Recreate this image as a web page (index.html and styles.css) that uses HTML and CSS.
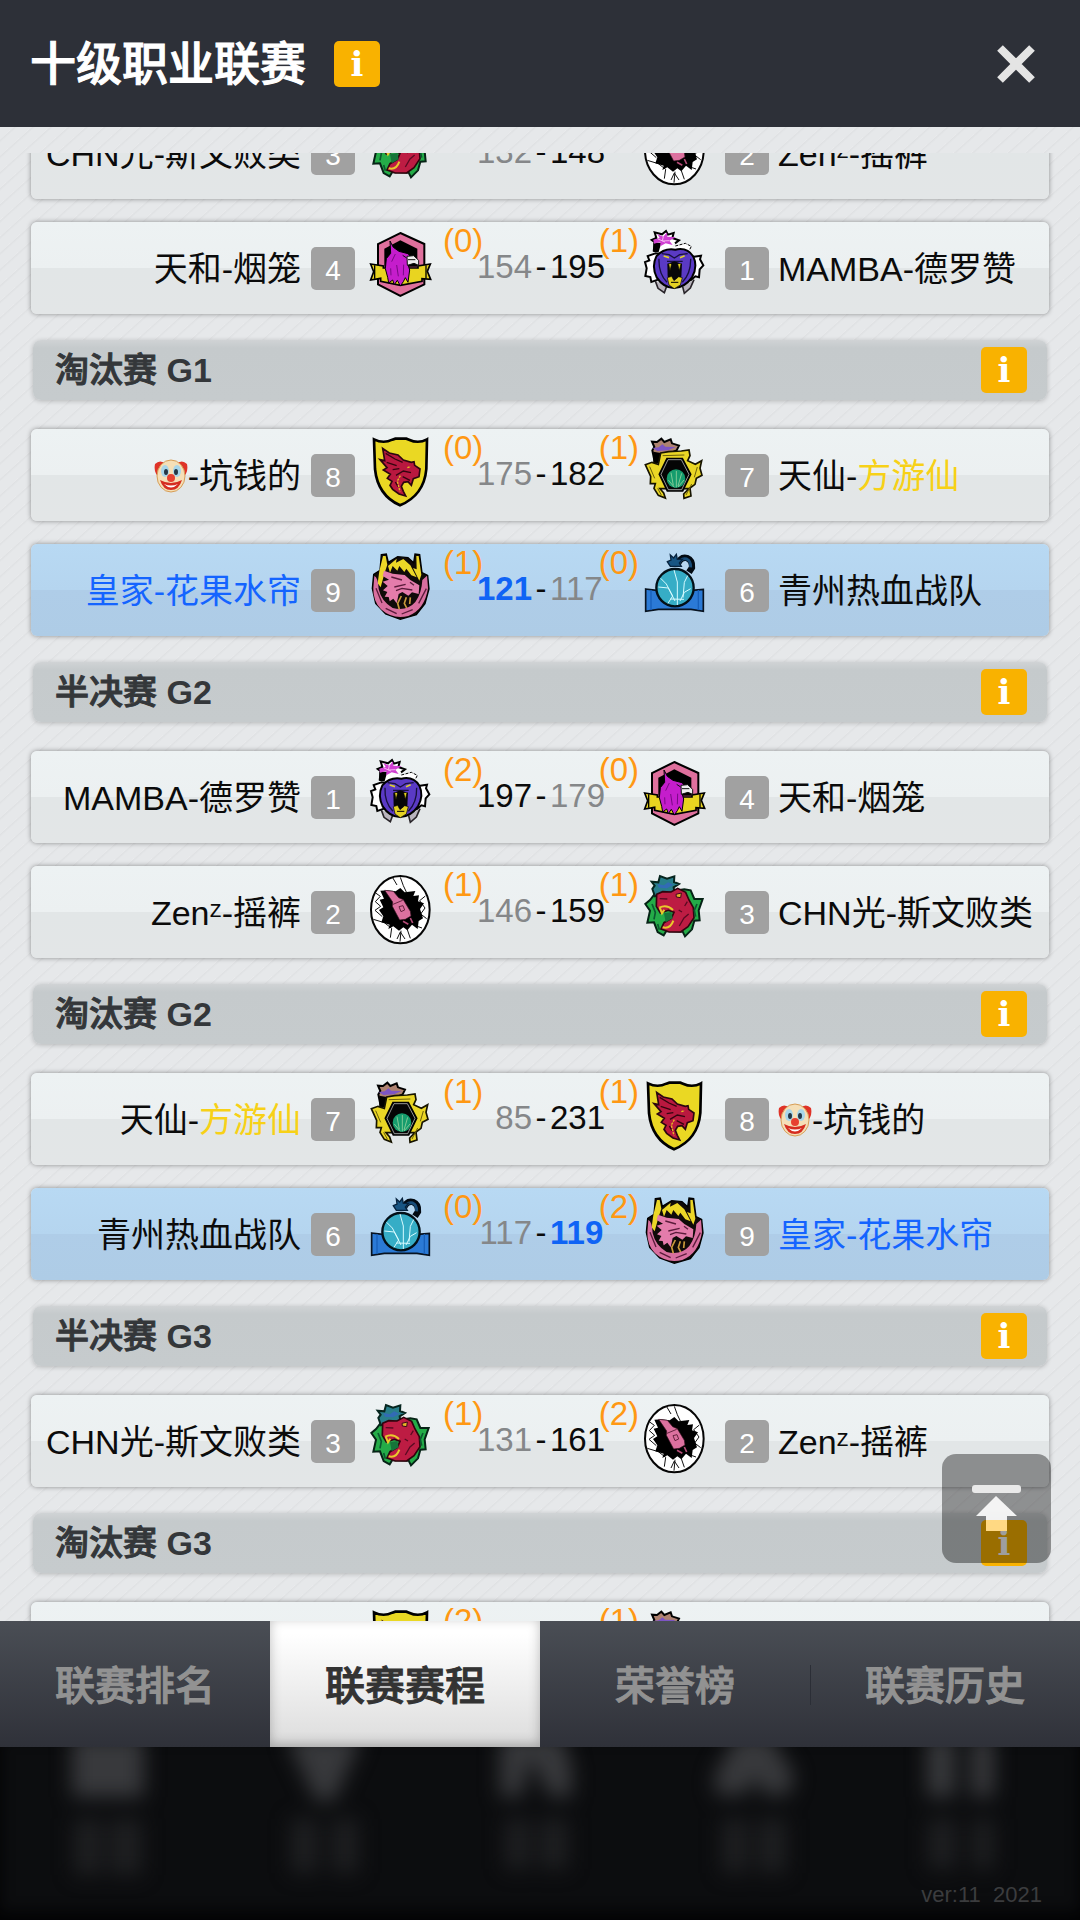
FILE: index.html
```html
<!DOCTYPE html>
<html lang="zh-CN">
<head>
    <meta charset="UTF-8">
    <meta name="viewport" content="width=device-width, initial-scale=1.0">
    <title>十级职业联赛</title>
    <link rel="stylesheet" href="styles.css">
</head>
<body>
    <!-- 队徽 -->
    <svg class="sprite" aria-hidden="true">
        <symbol id="logo-tianhe" viewBox="87 48 192 252">
            <path d="M181 69 253 102V223L181 258 114 223V102Z" fill="#df709d" stroke="#000" stroke-width="6"/>
            <path d="M181 91 232 116V170H133V116Z" fill="#000"/>
            <path d="M92 162 130 168V174H234V168L271 162 262 184 272 208 246 206V214L181 226 122 214V205L92 210 101 185Z" fill="#e9d420" stroke="#000" stroke-width="5"/>
            <path d="M104 166V206M258 166V206" stroke="#000" stroke-width="4"/>
            <path d="M150 93 160 112 177 124 204 131 211 139 202 156 209 180 204 217 196 203 190 215 181 228 172 211 163 224 158 210 146 219 143 202 136 176 139 146 152 130Z" fill="#c51dcc" stroke="#000" stroke-width="3"/>
            <path d="M166 132 155 155M170 165 175 199M191 164 190 196M152 175 153 196" fill="none" stroke="#780984" stroke-width="3"/>
            <path d="M201 139 221 137 236 151V166L222 160 202 166Z" fill="#eee" stroke="#111" stroke-width="3"/>
            <path d="M204 149H226M188 136 200 144" stroke="#111" stroke-width="3"/>
        </symbol>
        <symbol id="logo-mamba" viewBox="87 30 192 252">
            <path d="M124 112 101 120 106 133 93 138 98 157 94 180 109 183 112 198 132 191 230 193 244 181 255 184 257 160 268 148 258 130 261 119 240 122Z" fill="#fff" stroke="#000" stroke-width="6"/>
            <path d="M124 195 132 217 151 230 158 211M206 212 211 232 229 216 240 191" fill="#b9b4bd" stroke="#29252a" stroke-width="5"/>
            <path d="M119 107 122 79 113 72 127 66 122 49 144 55 156 45 162 56 179 51 175 66 195 73 183 82 174 94 214 80 232 91 227 101 180 103Z" fill="#fff"/>
            <path d="M119 107 122 79 113 72 127 66 122 49 144 55 156 45 162 56 179 51 175 66 195 73 183 82" fill="none" stroke="#000" stroke-width="6"/>
            <path d="M118 80H142L134 108H118Z" fill="#000"/>
            <path d="M184 90 214 82 232 91 227 101" fill="none" stroke="#000" stroke-width="3" stroke-dasharray="9 4"/>
            <path d="M118 71 137 66 130 54 148 62 159 49 160 62 185 64 166 74 176 87 155 82 139 91 139 78 120 83Z" fill="#d03fd2"/>
            <path d="M148 62 145 75 166 74M132 69 153 78" fill="none" stroke="#f4b6f0" stroke-width="3"/>
            <path d="M127 121Q150 95 184 101Q220 93 238 122Q252 151 234 184Q212 215 180 216Q148 215 128 184Q112 151 127 121Z" fill="#5a3ac5" stroke="#000" stroke-width="6"/>
            <path d="M149 120 165 125M212 119 198 125" stroke="#ddcf31" stroke-width="5"/>
            <path d="M143 113 165 116 181 126 197 116 221 113M135 128Q133 172 159 199M230 128Q231 172 205 199M159 136H206" fill="none" stroke="#17103f" stroke-width="4"/>
            <path d="M160 143 181 136 204 143 202 182 181 193 161 182Z" fill="#070609"/>
            <path d="M164 143 168 164 173 144M191 144 196 164 201 143M160 185 173 181 180 194 194 182 205 185 199 207 181 218 165 207Z" fill="#e4d123" stroke="#000" stroke-width="2"/>
            <path d="M171 199H193" stroke="#000" stroke-width="3"/>
        </symbol>
        <symbol id="logo-shield" viewBox="87 24 192 252">
            <path d="M102 43Q130 57 157 44L166 41H199L207 44Q235 57 261 43L259 132Q252 211 180 241Q113 211 105 132Z" fill="#ead823" stroke="#000" stroke-width="8"/>
            <path d="M128 70 148 84 174 90 190 105 214 112 222 110 224 121 240 132 237 155 220 161 214 181 204 170 191 172 184 184 190 199 197 213 177 207 158 193 150 181 156 169 142 160 151 148 130 135 141 128 120 104 134 107Z" fill="#b9183f" stroke="#2c0710" stroke-width="5"/>
            <path d="M137 85 165 102 188 112M140 112 170 122M158 134 178 131M168 151 190 138 213 143M188 155 210 166M166 171 174 185" fill="none" stroke="#33050f" stroke-width="4"/>
            <path d="M181 152 172 168 180 200M202 128 212 125" fill="none" stroke="#e5b923" stroke-width="4" stroke-dasharray="7 3"/>
        </symbol>
        <symbol id="logo-tianxian" viewBox="907 24 192 252">
            <path d="M941 106 935 76 941 66 934 50 949 51 962 41 971 51 990 43 994 55 1015 62 1008 76 985 86 963 99Z" fill="#ae8270" stroke="#000" stroke-width="6"/>
            <path d="M938 80 960 84 957 114H938Z" fill="#000"/>
            <path d="M936 69 954 67 965 58 974 65 1005 66 982 76 950 78Z" fill="#7d55c4"/>
            <path d="M960 84 984 80 1022 78 1045 75 1048 92 1041 107 1064 118 1083 107 1078 130 1084 151 1067 160 1063 178 1048 189 1051 213 1030 220 1029 207 1045 191H958L969 204 974 219 953 211 940 190 944 176 929 176 930 154 914 119 934 112 953 118Z" fill="#ead625" stroke="#171400" stroke-width="5"/>
            <path d="M979 101H1025L1050 148 1026 198H980L956 148Z" fill="#050505" stroke="#000" stroke-width="5"/>
            <path d="M982 104H1022L1045 148 1023 194H983L961 148Z" fill="none" stroke="#ddd" stroke-width="2"/>
            <circle cx="1006" cy="161" r="28" fill="#159c6d"/>
            <path d="M1007 138V187M991 143 998 181M1023 145 1012 183M983 165 1001 187M1030 165 1012 186" fill="none" stroke="#b5e0a9" stroke-width="2"/>
            <path d="M966 92 1031 90M927 125 942 160M1070 126 1061 157M951 190 962 210M1053 177 1036 210" fill="none" stroke="#6b5f0c" stroke-width="3"/>
        </symbol>
        <symbol id="logo-dragon" viewBox="87 24 192 252">
            <path d="M124 44 139 42 145 67 173 50 204 53 221 68 225 42 239 44 246 98 263 106 267 147 255 191 229 224 181 238 137 222 107 190 97 145 101 103 120 91Z" fill="#100b09" stroke="#000" stroke-width="4"/>
            <path d="M129 48 137 48 142 74 134 98 122 142 113 130 118 93ZM144 78 170 56 168 68 190 57 211 76 230 112 214 106 199 86 193 96 178 78 172 92 158 78 150 98ZM229 48 236 48 244 104 238 122 219 84 230 88Z" fill="#ecd727"/>
            <path d="M103 108Q114 112 116 147Q124 184 158 204Q202 214 226 186Q245 160 247 120L261 107L264 145Q254 209 205 228Q159 240 123 208Q99 184 100 145Z" fill="#d96f9f"/>
            <path d="M132 92 158 101 194 105 211 120 238 136 236 162 216 157 205 167 187 156 176 162 170 190 160 176 149 184 146 171 134 170 142 156 129 151 143 138 128 125 147 119 128 108Z" fill="#e47cab"/>
            <path d="M154 111 186 120M163 141 197 133M168 152 186 145 217 150M108 145 126 189M259 146 236 190M137 205 170 221M218 209 185 222M210 127 222 136" fill="none" stroke="#5b1c3b" stroke-width="4"/>
            <path d="M184 168 173 190 178 208M199 172 193 190 200 204M211 172 209 192" fill="none" stroke="#c99a3a" stroke-width="5"/>
        </symbol>
        <symbol id="logo-bomb" viewBox="907 24 192 252">
            <path d="M915 147 948 151H1053L1088 148V214L1051 208H953L915 214Z" fill="#2b7ad6" stroke="#081321" stroke-width="5"/>
            <path d="M931 150V210M1073 150V210" stroke="#1860ba" stroke-width="4"/>
            <path d="M1010 76Q1019 49 1039 54Q1056 61 1054 83L1045 97" fill="none" stroke="#020a12" stroke-width="19"/>
            <path d="M1012 76Q1020 52 1038 57Q1051 63 1050 82" fill="none" stroke="#174c78" stroke-width="9"/>
            <path d="M980 65 991 60 989 45 999 54 1007 43 1010 58 1025 58 1016 69 1022 79H989Z" fill="#185583" stroke="#07233e" stroke-width="4"/>
            <circle cx="1003" cy="143" r="56" fill="#36adc6" stroke="#031018" stroke-width="7"/>
            <path d="M1000 90 1010 126 1010 195M960 115 977 132 996 168 982 190M1041 107 1031 127 1027 173M953 141 983 144 1003 183M1050 146 1031 157 1018 183M989 177 1030 178" fill="none" stroke="#d7fbff" stroke-width="3"/>
        </symbol>
        <symbol id="logo-zen" viewBox="87 30 192 252">
            <ellipse cx="181" cy="149" rx="88" ry="101" fill="#fff" stroke="#050505" stroke-width="6"/>
            <path d="M181 52 190 77 199 96M158 53 171 75M107 99 121 109 106 125 122 139 105 151 127 170M100 178 133 188 155 205 151 233M256 108 239 122 255 144 242 162 260 176M183 212 180 245M202 209 211 235M229 198 246 204M171 237 181 216 195 237" fill="none" stroke="#111" stroke-width="3"/>
            <path d="M121 92 143 91 167 94 181 84 194 97 226 93 220 108 237 106 234 124 252 130 240 147 249 175 236 183 233 207 216 194 202 211 190 202 177 212 160 199 145 207 149 194 124 187 130 169 117 150 130 142 119 119 132 116Z" fill="#000"/>
            <path d="M134 91 160 94 176 113 190 119 211 154 213 168 196 178 179 180 157 139 158 126Z" fill="#dc719f" stroke="#371020" stroke-width="2"/>
            <path d="M159 133 188 121M177 140 189 137 194 150 183 155Z" fill="none" stroke="#67233f" stroke-width="3"/>
            <path d="M189 184 205 193M211 174 218 189" stroke="#b44c78" stroke-width="5"/>
        </symbol>
        <symbol id="logo-chn" viewBox="907 30 192 252">
            <path d="M943 101 928 120 914 132 928 152 920 188 940 187 951 216 969 226 977 213 1026 215 1033 229 1054 208 1061 182 1077 181 1074 151 1086 117 1061 117 1050 91 1031 88Z" fill="#24ac48" stroke="#062316" stroke-width="6"/>
            <path d="M943 109 935 87 942 77 933 65 953 67 958 48 979 56 1001 49 1000 66 1015 72 999 82 1001 96 961 103Z" fill="#297f8b" stroke="#07261f" stroke-width="6"/>
            <path d="M950 72 970 76 982 67 998 74 979 85 955 83Z" fill="#326bb5"/>
            <path d="M948 103 966 95 991 96 1011 85 1035 97 1045 120 1058 143 1060 173 1042 200 1020 216H986L961 207 970 188 992 175 1000 157 983 151 959 159 947 139Z" fill="#bd1c43" stroke="#31040e" stroke-width="5"/>
            <path d="M970 160 992 156 996 175 975 187Z" fill="#16753a"/>
            <path d="M956 143Q978 132 997 150M957 142 964 160 971 149M966 202Q989 208 998 182" fill="none" stroke="#e9c92c" stroke-width="6"/>
            <path d="M1006 103 1022 99 1020 113 1007 111Z" fill="#e8b526" stroke="#3c071b" stroke-width="3"/>
            <path d="M957 116 980 117M1040 125 1032 138M1044 162 1030 174 1016 198M1014 150 1024 156" fill="none" stroke="#5a0a22" stroke-width="4"/>
            <path d="M934 132 944 157 940 178M1069 132 1061 151 1065 170M951 192 956 209" fill="none" stroke="#0b5930" stroke-width="5"/>
        </symbol>
        <symbol id="clown" viewBox="0 0 34 34">
            <path d="M1 5Q6 0 12 5L7 20Q-1 15 1 5ZM33 5Q28 0 22 5L27 20Q35 15 33 5Z" fill="#df3328"/>
            <ellipse cx="17" cy="17" rx="14" ry="16" fill="#f5dfb7" stroke="#d79d55"/>
            <ellipse cx="11" cy="12" rx="4" ry="6" fill="#a8d6ea"/>
            <ellipse cx="23" cy="12" rx="4" ry="6" fill="#a8d6ea"/>
            <ellipse cx="12" cy="13" rx="2" ry="3" fill="#243746"/>
            <ellipse cx="22" cy="13" rx="2" ry="3" fill="#243746"/>
            <path d="M6 21Q17 27 28 21Q25 31 17 31Q9 31 6 21Z" fill="#d52d20"/>
            <path d="M10 25Q17 28 24 25Q17 32 10 25Z" fill="#fff"/>
            <circle cx="17" cy="19" r="4" fill="#e74130"/>
        </symbol>
    </svg>

    <header class="header">
        <h1>十级职业联赛</h1>
        <button class="btn-info" type="button" aria-label="联赛说明">i</button>
        <button class="btn-close" type="button" aria-label="关闭">
            <svg viewBox="0 0 40 40" aria-hidden="true"><path d="M4 4 36 36M36 4 4 36" stroke="#e4e4e4" stroke-width="8"/></svg>
        </button>
    </header>

    <main class="content">
        <div class="schedule">
            <div class="match">
                <span class="team home">CHN光-斯文败类</span>
                <span class="seed">3</span>
                <svg class="logo home"><use href="#logo-chn"/></svg>
                <div class="score">
                    <span class="wins home">(0)</span>
                    <span class="points lose">132</span><span>-</span><span class="points">148</span>
                    <span class="wins away">(1)</span>
                </div>
                <svg class="logo"><use href="#logo-zen"/></svg>
                <span class="seed">2</span>
                <span class="team">Zenᶻ-摇裤</span>
            </div>
            <div class="match">
                <span class="team home">天和-烟笼</span>
                <span class="seed">4</span>
                <svg class="logo home"><use href="#logo-tianhe"/></svg>
                <div class="score">
                    <span class="wins home">(0)</span>
                    <span class="points lose">154</span><span>-</span><span class="points">195</span>
                    <span class="wins away">(1)</span>
                </div>
                <svg class="logo"><use href="#logo-mamba"/></svg>
                <span class="seed">1</span>
                <span class="team">MAMBA-德罗赞</span>
            </div>

            <div class="round">
                <h2>淘汰赛 <b>G1</b></h2>
                <button class="btn-info" type="button" aria-label="淘汰赛 G1 说明">i</button>
            </div>
            <div class="match">
                <span class="team home"><svg class="emoji" role="img" aria-label="小丑"><use href="#clown"/></svg>-坑钱的</span>
                <span class="seed">8</span>
                <svg class="logo home"><use href="#logo-shield"/></svg>
                <div class="score">
                    <span class="wins home">(0)</span>
                    <span class="points lose">175</span><span>-</span><span class="points">182</span>
                    <span class="wins away">(1)</span>
                </div>
                <svg class="logo"><use href="#logo-tianxian"/></svg>
                <span class="seed">7</span>
                <span class="team">天仙-<span class="gold">方游仙</span></span>
            </div>
            <div class="match mine">
                <span class="team home me">皇家-花果水帘</span>
                <span class="seed">9</span>
                <svg class="logo home"><use href="#logo-dragon"/></svg>
                <div class="score">
                    <span class="wins home">(1)</span>
                    <span class="points me">121</span><span>-</span><span class="points lose">117</span>
                    <span class="wins away">(0)</span>
                </div>
                <svg class="logo"><use href="#logo-bomb"/></svg>
                <span class="seed">6</span>
                <span class="team">青州热血战队</span>
            </div>

            <div class="round">
                <h2>半决赛 <b>G2</b></h2>
                <button class="btn-info" type="button" aria-label="半决赛 G2 说明">i</button>
            </div>
            <div class="match">
                <span class="team home">MAMBA-德罗赞</span>
                <span class="seed">1</span>
                <svg class="logo home"><use href="#logo-mamba"/></svg>
                <div class="score">
                    <span class="wins home">(2)</span>
                    <span class="points">197</span><span>-</span><span class="points lose">179</span>
                    <span class="wins away">(0)</span>
                </div>
                <svg class="logo"><use href="#logo-tianhe"/></svg>
                <span class="seed">4</span>
                <span class="team">天和-烟笼</span>
            </div>
            <div class="match">
                <span class="team home">Zenᶻ-摇裤</span>
                <span class="seed">2</span>
                <svg class="logo home"><use href="#logo-zen"/></svg>
                <div class="score">
                    <span class="wins home">(1)</span>
                    <span class="points lose">146</span><span>-</span><span class="points">159</span>
                    <span class="wins away">(1)</span>
                </div>
                <svg class="logo"><use href="#logo-chn"/></svg>
                <span class="seed">3</span>
                <span class="team">CHN光-斯文败类</span>
            </div>

            <div class="round">
                <h2>淘汰赛 <b>G2</b></h2>
                <button class="btn-info" type="button" aria-label="淘汰赛 G2 说明">i</button>
            </div>
            <div class="match">
                <span class="team home">天仙-<span class="gold">方游仙</span></span>
                <span class="seed">7</span>
                <svg class="logo home"><use href="#logo-tianxian"/></svg>
                <div class="score">
                    <span class="wins home">(1)</span>
                    <span class="points lose">85</span><span>-</span><span class="points">231</span>
                    <span class="wins away">(1)</span>
                </div>
                <svg class="logo"><use href="#logo-shield"/></svg>
                <span class="seed">8</span>
                <span class="team"><svg class="emoji" role="img" aria-label="小丑"><use href="#clown"/></svg>-坑钱的</span>
            </div>
            <div class="match mine">
                <span class="team home">青州热血战队</span>
                <span class="seed">6</span>
                <svg class="logo home"><use href="#logo-bomb"/></svg>
                <div class="score">
                    <span class="wins home">(0)</span>
                    <span class="points lose">117</span><span>-</span><span class="points me">119</span>
                    <span class="wins away">(2)</span>
                </div>
                <svg class="logo"><use href="#logo-dragon"/></svg>
                <span class="seed">9</span>
                <span class="team me">皇家-花果水帘</span>
            </div>

            <div class="round">
                <h2>半决赛 <b>G3</b></h2>
                <button class="btn-info" type="button" aria-label="半决赛 G3 说明">i</button>
            </div>
            <div class="match">
                <span class="team home">CHN光-斯文败类</span>
                <span class="seed">3</span>
                <svg class="logo home"><use href="#logo-chn"/></svg>
                <div class="score">
                    <span class="wins home">(1)</span>
                    <span class="points lose">131</span><span>-</span><span class="points">161</span>
                    <span class="wins away">(2)</span>
                </div>
                <svg class="logo"><use href="#logo-zen"/></svg>
                <span class="seed">2</span>
                <span class="team">Zenᶻ-摇裤</span>
            </div>

            <div class="round">
                <h2>淘汰赛 <b>G3</b></h2>
                <button class="btn-info" type="button" aria-label="淘汰赛 G3 说明">i</button>
            </div>
            <div class="match">
                <span class="team home"></span>
                <span></span>
                <svg class="logo home"><use href="#logo-shield"/></svg>
                <div class="score">
                    <span class="wins home">(2)</span>
                    <span class="wins away">(1)</span>
                </div>
                <svg class="logo"><use href="#logo-tianxian"/></svg>
            </div>
        </div>

        <button class="btn-top" type="button" aria-label="回到顶部">
            <svg viewBox="0 0 109 109" aria-hidden="true">
                <rect x="30" y="31" width="49" height="8" rx="3" fill="#e9e9e9"/>
                <path d="M54 42 75 62H65V77H44V62H34Z" fill="#fff" fill-opacity=".9"/>
                <path d="M44 66H65V77H44Z" fill="#ffd983"/>
            </svg>
        </button>
    </main>

    <nav class="tabs">
        <a href="#">联赛排名</a>
        <a href="#" class="active" aria-current="page">联赛赛程</a>
        <a href="#">荣誉榜</a>
        <a href="#">联赛历史</a>
    </nav>

    <footer class="footer">
        <!-- 底部菜单的模糊倒影 -->
        <div class="shadows" aria-hidden="true">
            <svg viewBox="0 0 120 140"><path d="M24-10H96V50H24Z"/><path class="dim" d="M26 72H54V128H26ZM62 72H94V128H62Z"/></svg>
            <svg viewBox="0 0 120 140"><path d="M22-10H98L70 54H52Z"/><path class="dim" d="M27 72H54V126H27ZM68 72H94V126H68Z"/></svg>
            <svg viewBox="0 0 120 140"><path d="M20-10H82L92 20V50H70L50 10 42 50H20Z"/><path class="dim" d="M25 72H50V122H25ZM60 72H88V122H60Z"/></svg>
            <svg viewBox="0 0 120 140"><path d="M40-10H75L99 30 92 48H68L60 30 48 48H20L18 30Z"/><path class="dim" d="M26 72H52V126H26ZM62 72H90V126H62Z"/></svg>
            <svg viewBox="0 0 120 140"><path d="M15-10H43V50H15ZM59-10H82V50H59Z"/><path class="dim" d="M16 72H44V122H16ZM60 72H82V122H60Z"/></svg>
        </div>
        <p class="version">ver:11 &nbsp;2021</p>
    </footer>
</body>
</html>
```

FILE: styles.css
```css
* {
    box-sizing: border-box;
}

body {
    margin: 0;
    height: 100vh;
    display: flex;
    flex-direction: column;
    overflow: hidden;
    font-family: "Liberation Sans", "Noto Sans CJK SC", "DejaVu Sans", sans-serif;
    font-size: 34px;
    color: #0b0b0b;
    background: #0c0d0f;
}

button {
    border: none;
    padding: 0;
    background: none;
    cursor: pointer;
}

.sprite {
    display: none;
}

/* 顶部标题栏 */
.header {
    flex: none;
    height: 127px;
    padding: 0 44px 0 30px;
    display: flex;
    align-items: center;
    background: #2d3038;
}

.header h1 {
    margin: 0 28px 0 0;
    font-size: 46px;
    font-weight: 500;
    line-height: 56px;
    color: #fff;
    -webkit-text-stroke: 1px #fff;
}

.btn-info {
    width: 46px;
    height: 46px;
    border-radius: 5px;
    background: #f9b200;
    color: #fff;
    font-family: "DejaVu Serif", serif;
    font-size: 34px;
    font-weight: bold;
    line-height: 46px;
}

.btn-close {
    width: 40px;
    height: 40px;
    margin-left: auto;
}

.btn-close svg {
    display: block;
}

/* 赛程列表 */
.content {
    position: relative;
    flex: 1;
    min-height: 0;
    padding-top: 26px;
    background: repeating-linear-gradient(-42deg, #e6e8ea 0, #e6e8ea 9px, #dfe1e3 11px, #eaebed 12px);
}

.schedule {
    height: 100%;
    padding: 0 31px;
    overflow: hidden;
}

.match {
    position: relative;
    height: 92px;
    margin-bottom: 23px;
    display: grid;
    grid-template-columns: 1fr 44px 78px 210px 82px 44px 1fr;
    align-items: center;
    border-radius: 6px;
    background: linear-gradient(#edf2f3 0, #ecf0f1 50%, #e2e6e7 50%, #e3e6e7 100%);
    box-shadow: 0 0 5px rgba(0, 0, 0, 0.4);
}

/* 列表已向下滚动，第一行只露出下半部分 */
.match:first-child {
    margin-top: -46px;
}

.match.mine {
    background: linear-gradient(#b8d9f3 0, #b5d5ef 50%, #afcde8 50%, #aecce6 100%);
}

.team {
    padding: 2px 9px 0;
    line-height: 44px;
    white-space: nowrap;
}

.team.home {
    padding-right: 10px;
    text-align: right;
}

.team.me {
    color: #1464ff;
}

.gold {
    color: #f7d117;
}

.emoji {
    width: 34px;
    height: 34px;
    vertical-align: -5px;
}

.seed {
    height: 43px;
    border-radius: 5px;
    background: #a1a1a1;
    color: #fff;
    font-size: 28px;
    line-height: 47px;
    text-align: center;
}

.logo {
    width: 64px;
    height: 84px;
}

.logo.home {
    justify-self: end;
}

.score {
    position: relative;
    height: 92px;
    display: grid;
    grid-template-columns: 99px 18px 1fr;
    font-size: 33px;
    line-height: 90px;
    text-align: center;
}

.points {
    text-align: left;
}

.points:nth-child(2) {
    text-align: right;
}

.points.lose {
    color: #858789;
}

.points.me {
    color: #0f63f5;
    font-weight: bold;
}

.wins {
    position: absolute;
    top: 2px;
    line-height: 34px;
    color: #ff9813;
}

.wins.home {
    left: 10px;
}

.wins.away {
    right: 4px;
}

.round {
    height: 60px;
    margin: 26px 2px 29px;
    padding: 0 20px 0 22px;
    display: flex;
    align-items: center;
    justify-content: space-between;
    border-radius: 8px;
    background: linear-gradient(#d0d3d5 0, #c5cacc 8px, #c6cbcd 100%);
    box-shadow: 0 1px 5px rgba(0, 0, 0, 0.22);
}

.round h2 {
    margin: 0;
    font-size: 34px;
    font-weight: 500;
    line-height: 44px;
    color: #34373a;
    -webkit-text-stroke: 1px #34373a;
}

.round b {
    -webkit-text-stroke: 0;
}

.btn-top {
    position: absolute;
    right: 29px;
    bottom: 58px;
    width: 109px;
    height: 109px;
    border-radius: 14px;
    background: rgba(0, 0, 0, 0.38);
}

.btn-top svg {
    display: block;
}

/* 底部标签 */
.tabs {
    flex: none;
    height: 126px;
    display: flex;
    background: linear-gradient(#4a4e55, #2f3139);
}

.tabs a {
    position: relative;
    flex: 1;
    padding-top: 2px;
    font-size: 40px;
    font-weight: 500;
    line-height: 126px;
    text-align: center;
    text-decoration: none;
    color: #929292;
    -webkit-text-stroke: 1px currentColor;
}

.tabs a.active {
    color: #333;
    background: linear-gradient(#fff 10%, #dcdcdc);
    box-shadow: inset 0 -3px 12px rgba(0, 0, 0, 0.25);
}

.tabs a:last-child::before {
    content: "";
    position: absolute;
    left: 0;
    top: 44px;
    width: 1px;
    height: 40px;
    background: #2b2e36;
}

.footer {
    flex: none;
    position: relative;
    height: 173px;
    overflow: hidden;
    background: #0c0d0f;
    box-shadow: inset 0 -8px 14px #030304;
}

.shadows {
    display: flex;
    justify-content: space-around;
    filter: blur(10px);
}

.shadows svg {
    width: 120px;
    height: 140px;
    overflow: visible;
    fill: #38393c;
}

.shadows .dim {
    fill: #1e1f21;
}

.version {
    position: absolute;
    right: 38px;
    bottom: 12px;
    margin: 0;
    font-size: 22px;
    line-height: 26px;
    color: #3b3c3e;
}
```
